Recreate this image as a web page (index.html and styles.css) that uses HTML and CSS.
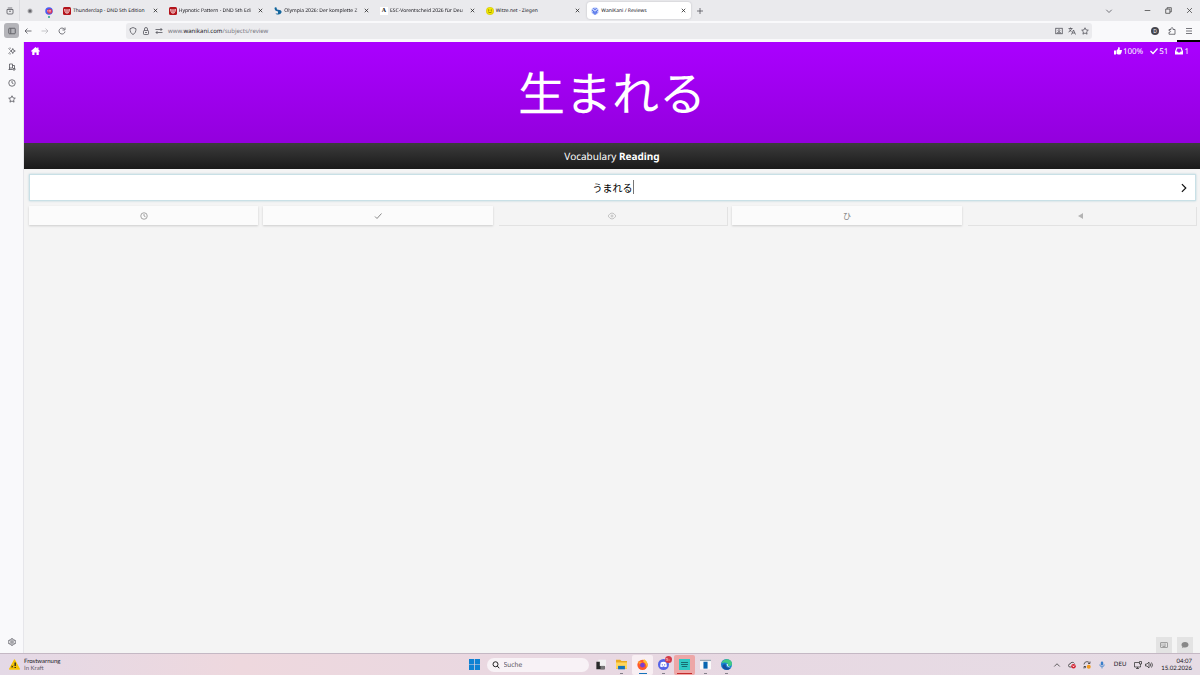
FILE: index.html
```html
<!DOCTYPE html>
<html lang="de">
<head>
<meta charset="utf-8">
<title>WaniKani / Reviews</title>
<link rel="stylesheet" href="styles.css">
</head>
<body>
<svg class="sprite" aria-hidden="true">
    <symbol id="close" viewBox="0 0 10 10"><path d="M1.5 1.5l7 7M8.5 1.5l-7 7"/></symbol>
    <symbol id="star" viewBox="0 0 16 16"><path d="M8 1.5l2 4.3 4.6.6-3.4 3.2.9 4.7L8 12l-4.1 2.3.9-4.7L1.4 6.4 6 5.8z"/></symbol>
    <symbol id="clock" viewBox="0 0 16 16"><circle cx="8" cy="8" r="6.5"/><path d="M8 4v4l3 1.5"/></symbol>
    <symbol id="dnd" viewBox="0 0 16 16"><rect width="16" height="16" rx="3" fill="#b3131b"/><path d="M2 4l4 1 2-1 2 1 4-1-1 5-3 4H6L3 9z" fill="#f6d5d5"/><path d="M5.500 5v5M10.500 5v5M8 4v8" stroke="#b3131b" stroke-width="1.200"/></symbol>
</svg>

<header class="tabbar">
    <button class="view" aria-label="Firefox View"><svg class="ic" viewBox="0 0 16 16"><path d="M3.500 2h9M2 5h12v7a2 2 0 0 1-2 2H4a2 2 0 0 1-2-2zM6 8.500h4"/></svg></button>
    <button class="pin" aria-label="Angeheftet"><svg class="fav" viewBox="0 0 16 16"><circle cx="8" cy="8" r="5" fill="#b0b0b4"/><circle cx="8" cy="8" r="3" fill="#66666c"/></svg></button>
    <button class="pin dot" aria-label="Chat"><svg class="fav" viewBox="0 0 16 16"><circle cx="8" cy="8" r="7.500" fill="#4d5cf0"/><path d="M4 10V6h6v4z" fill="#fff"/><circle cx="9.500" cy="8.500" r="5" fill="#d8365c"/><path d="M7 7h5M7 9.500h5" stroke="#fff" stroke-width="1"/></svg></button>
    <nav class="tabs">
        <div class="tab"><svg class="fav"><use href="#dnd"/></svg><a href="#">Thunderclap - DND 5th Edition</a><button aria-label="Schließen"><svg class="x"><use href="#close"/></svg></button></div>
        <div class="tab"><svg class="fav"><use href="#dnd"/></svg><a class="fade" href="#">Hypnotic Pattern - DND 5th Edi</a><button aria-label="Schließen"><svg class="x"><use href="#close"/></svg></button></div>
        <div class="tab"><svg class="fav" viewBox="0 0 16 16"><path d="M1 2q1-2 4-1l1 4 5 1q5 1 4 5-2 5-8 4-3 0-4-2h5V9Q1 8 1 2z" fill="#14679e"/></svg><a class="fade" href="#">Olympia 2026: Der komplette Z</a><button aria-label="Schließen"><svg class="x"><use href="#close"/></svg></button></div>
        <div class="tab"><span class="fav letter">A</span><a class="fade" href="#">ESC-Vorentscheid 2026 für Deu</a><button aria-label="Schließen"><svg class="x"><use href="#close"/></svg></button></div>
        <div class="tab"><svg class="fav" viewBox="0 0 16 16"><circle cx="8" cy="8" r="7.500" fill="#f4ea00" stroke="#c5b800"/><circle cx="5.500" cy="6" r="1.200" fill="#554c00"/><circle cx="10.500" cy="6" r="1.200" fill="#554c00"/><path d="M4 9.500q4 4 8 0" fill="none" stroke="#554c00"/></svg><a href="#">Witze.net - Ziegen</a><button aria-label="Schließen"><svg class="x"><use href="#close"/></svg></button></div>
        <div class="tab active"><svg class="fav" viewBox="0 0 16 16"><circle cx="8" cy="8" r="7.500" fill="#c6d3fb"/><path d="M5 2l2 3h2l2-3M2 6l3 2-1 4M14 6l-3 2 1 4M6 10h4v4H6z" fill="none" stroke="#4a6ce8" stroke-width="2"/></svg><a href="#">WaniKani / Reviews</a><button aria-label="Schließen"><svg class="x"><use href="#close"/></svg></button></div>
    </nav>
    <button class="new" aria-label="Neuer Tab"><svg class="ic" viewBox="0 0 16 16"><path d="M8 2v12M2 8h12"/></svg></button>
    <div class="window">
        <button aria-label="Alle Tabs"><svg class="ic" viewBox="0 0 16 16"><path d="M2.500 5.500L8 11l5.500-5.500"/></svg></button>
        <button class="min" aria-label="Minimieren"><svg class="wi" viewBox="0 0 10 10"><path d="M1 5h8"/></svg></button>
        <button aria-label="Verkleinern"><svg class="wi" viewBox="0 0 10 10"><path d="M1 3h6v6H1zM3 3V1h6v6H7"/></svg></button>
        <button aria-label="Fenster schließen"><svg class="wi"><use href="#close"/></svg></button>
    </div>
</header>

<div class="toolbar">
    <div class="nav">
        <button class="side-toggle" aria-label="Seitenleiste"><svg class="ic" viewBox="0 0 16 16"><rect x="1.500" y="2.500" width="13" height="11" rx="1.500"/><path d="M5.500 3v10"/></svg></button>
        <button aria-label="Zurück"><svg class="ic" viewBox="0 0 16 16"><path d="M15 8H2M7 3L2 8l5 5"/></svg></button>
        <button aria-label="Vor" disabled><svg class="ic" viewBox="0 0 16 16"><path d="M1 8h13M9 3l5 5-5 5"/></svg></button>
        <button aria-label="Neu laden"><svg class="ic" viewBox="0 0 16 16"><path d="M14 9A6 6 0 1 1 12.500 4M14 1v5H9"/></svg></button>
    </div>
    <div class="urlbar">
        <svg class="ic" viewBox="0 0 16 16"><path d="M8 1l6 2.500c0 6-2 9.500-6 11.500-4-2-6-5.500-6-11.500z"/></svg>
        <svg class="ic" viewBox="0 0 16 16"><rect x="3" y="7" width="10" height="8" rx="1.500"/><path d="M5 7V4a3 3 0 0 1 6 0v3M6 11h4"/></svg>
        <svg class="ic" viewBox="0 0 16 16"><path d="M1 5h13M11 2l3 3-3 3M15 11H2M5 8l-3 3 3 3"/></svg>
        <a class="url" href="#">www.<b>wanikani.com</b>/subjects/review</a>
        <button aria-label="Installieren"><svg class="ic" viewBox="0 0 16 16"><rect x="1.500" y="2.500" width="13" height="11"/><path d="M8 4v5M5.500 7L8 9.500 10.500 7M4 11.500h8"/></svg></button>
        <button aria-label="Übersetzen"><svg class="ic" viewBox="0 0 16 16"><path d="M1 3h8M5 1v2M7.500 3Q6 8 1 10M3 5q2 4 4 4M7 15l4-9 4 9M8.500 12h5"/></svg></button>
        <button aria-label="Lesezeichen"><svg class="ic"><use href="#star"/></svg></button>
    </div>
    <div class="extras">
        <button class="account" aria-label="Konto">D</button>
        <button aria-label="Erweiterungen"><svg class="ic" viewBox="0 0 16 16"><path d="M2 14.500v-4c4 1 4-4 0-3V5h4c-1-5 5-5 4 0h4v9.500z"/></svg></button>
        <button aria-label="Menü"><svg class="ic" viewBox="0 0 16 16"><path d="M2 3h12M2 8h12M2 13h12"/></svg></button>
    </div>
    <span class="strip"></span>
</div>

<div class="main">
    <aside class="sidebar">
        <button aria-label="KI-Chatbot"><svg class="ic" viewBox="0 0 16 16"><path d="M9.500 3l1.500 3.500L14.500 8 11 9.500 9.500 13 8 9.500 4.500 8 8 6.500zM1 3l3 2M1 13l3-2M4 1l1 2M4 15l1-2"/></svg></button>
        <button aria-label="Synchronisierte Tabs"><svg class="ic" viewBox="0 0 16 16"><path d="M3 10V2h6v8zM9 5h4v6M1 13h8M3 10v3M10 11h4v3h-4z"/></svg></button>
        <button aria-label="Chronik"><svg class="ic"><use href="#clock"/></svg></button>
        <button aria-label="Lesezeichen"><svg class="ic"><use href="#star"/></svg></button>
        <button class="settings" aria-label="Einstellungen"><svg class="ic" viewBox="0 0 16 16"><path d="M6.500 1.500h3l.5 2 2 1 2-.5 1 2.500L13.500 8l1.500 1.500-1 2.500-2-.5-2 1-.5 2h-3l-.5-2-2-1-2 .5-1-2.500L2.500 8 1 6.500 2 4l2 .5 2-1z"/><circle cx="8" cy="8" r="2.500"/></svg></button>
    </aside>

    <main class="review">
        <div class="character">
            <div class="topline">
                <a class="home" href="#" aria-label="Startseite"><svg viewBox="0 0 18 16"><path d="M9 0L0 8l1.300 1.500L2.500 8.500V16H7v-5h4v5h4.500V8.500l1.200 1L18 8l-3-2.700V1h-2.500v2z"/></svg></a>
                <div class="stats">
                    <span><svg viewBox="0 0 16 16"><path d="M0 7h4v8H0zM5 7l3-3 1-4c3 0 3 3 2 6h4c2 1 1 2 0 3 1 1 0 2-.5 2.500.5 1-.5 2-1 2-.5 1.500-1 1.500-2 1.500H8l-3-1.500z"/></svg>100%</span>
                    <span><svg viewBox="0 0 16 16"><path d="M1 8l5 5 9-10" fill="none" stroke="#fff" stroke-width="2.500"/></svg>51</span>
                    <span><svg viewBox="0 0 16 16"><path fill-rule="evenodd" d="M3 1h10l3 8v6H0V9zM4.500 3L2.500 9H5l1 2h4l1-2h2.500l-2-6z"/></svg>1</span>
                </div>
            </div>
            <h1 lang="ja">生まれる</h1>
        </div>
        <div class="question">Vocabulary <b>Reading</b></div>
        <form class="answer">
            <input type="text" lang="ja" value="うまれる" aria-label="Reading">
            <span class="caret"></span>
            <button type="button" aria-label="Weiter"><svg viewBox="0 0 10 16"><path d="M1.500 1.500L8 8l-6.500 6.500"/></svg></button>
        </form>
        <div class="actions">
            <button aria-label="Last items"><svg><use href="#clock"/></svg></button>
            <button aria-label="Correct"><svg viewBox="0 0 16 16"><path d="M2 9l4 4 9-10" stroke-width="2"/></svg></button>
            <button aria-label="Item info" disabled><svg viewBox="0 0 16 16"><path d="M0 8q8-12 16 0-8 12-16 0z"/><circle cx="8" cy="8" r="2"/></svg></button>
            <button class="kana" lang="ja" aria-label="Kana">ひ</button>
            <button aria-label="Audio" disabled><svg viewBox="0 0 16 16"><path class="solid" d="M2 8l7-4 3-2v12l-3-2z"/></svg></button>
        </div>
        <div class="tools">
            <button aria-label="Keyboard"><svg viewBox="0 0 16 16"><rect x="1" y="3" width="14" height="10" rx="1"/><path d="M3 6h10M3 8.500h10" stroke-dasharray="1.500 1"/><path d="M5 11h6"/></svg></button>
            <button aria-label="Feedback"><svg viewBox="0 0 16 16"><path class="solid" d="M8 2c4.500 0 7 2.500 7 5.500S12.500 13 8 13q-1.500 0-2.500-.4Q4 14 1.500 14.500 3 13 3 11.500 1 10 1 7.500C1 4.500 3.500 2 8 2z"/></svg></button>
        </div>
    </main>
</div>

<footer class="taskbar">
    <a class="weather" href="#">
        <svg viewBox="0 0 16 16"><path d="M8 1.500L15 14.500H1z" fill="#f5c400" stroke="#f5c400" stroke-width="2" stroke-linejoin="round"/><path d="M9 5v5M9 11.500v1.500" stroke="#222" stroke-width="2"/><path d="M3 10l3 2M6 9.500l-2 3" stroke="#222"/></svg>
        <span>Frostwarnung<small>In Kraft</small></span>
    </a>
    <div class="apps">
        <button aria-label="Start"><svg viewBox="0 0 16 16"><path d="M0 0h7.500v7.500H0zM8.500 0H16v7.500H8.500zM0 8.500h7.500V16H0zM8.500 8.500H16V16H8.500z" fill="#0e82d3"/></svg></button>
        <label class="search"><svg viewBox="0 0 16 16"><circle cx="7" cy="6.500" r="5"/><path d="M10.500 10l4 4.500"/></svg><input type="search" placeholder="Suche" aria-label="Suche"></label>
        <button aria-label="Taskansicht"><svg viewBox="0 0 16 16"><path d="M5 1h11v10H5z" fill="#f2f2f2"/><path d="M2 4h5v6h7v5H2z" fill="#292929"/><path d="M8 10h6v5H8z" fill="#777"/></svg></button>
        <button class="run" aria-label="Explorer"><svg viewBox="0 0 16 16"><path d="M0 1h6l2 2h8v11H0z" fill="#e9a91f"/><path d="M0 5h16v9H0z" fill="#ffd65c"/><path d="M3 10h10v5H3z" fill="#1673ba"/></svg></button>
        <button class="run current" aria-label="Firefox"><svg viewBox="0 0 16 16"><circle cx="8" cy="8.500" r="7.500" fill="#ff5a2c"/><path d="M10 0c5 3 7 9 4 13 0-6-3-8-5-9z" fill="#ffbf2e"/><path d="M1 4c3-1 5 0 6 1l-3 3z" fill="#ff9d2a"/><circle cx="8" cy="9" r="3.500" fill="#7a3fcf"/></svg></button>
        <button class="run" aria-label="Discord"><svg viewBox="0 0 16 16"><circle cx="8" cy="8" r="8" fill="#5463e8"/><path d="M4 5q4-2 8 0l1 6-3 1-1-1H7l-1 1-3-1z" fill="#fff"/><circle cx="6.300" cy="8.500" r="1" fill="#5463e8"/><circle cx="9.700" cy="8.500" r="1" fill="#5463e8"/></svg><i class="badge">9+</i></button>
        <button class="run alert" aria-label="Notizen"><svg viewBox="0 0 16 16"><path d="M0 0h16v16H0z" fill="#2fc9c4"/><path d="M3 5h10M3 8h10M4 11h8" stroke="#176b70" stroke-width="1.500"/></svg></button>
        <button class="run" aria-label="Programm"><svg viewBox="0 0 16 16"><path d="M0 1h16v14H0z" fill="#fafafa"/><path d="M0 1h16v2H0z" fill="#9aa8b5"/><path d="M5 4h6v10H5z" fill="#0866b1"/></svg></button>
        <button class="run" aria-label="Edge"><svg viewBox="0 0 16 16"><circle cx="8" cy="8" r="8" fill="#1681cf"/><path d="M1 6C3-2 16-1 16 7c0 4-5 4-6 2 1-3-4-5-9-3z" fill="#43c985"/><path d="M7 8c-1 4 3 6 7 5-3 4-10 4-12-2 0-3 3-4 5-3z" fill="#174f9f"/><path d="M8 7q3 0 2 3l4 2q-5 1-6-5z" fill="#e9f5f5"/></svg></button>
    </div>
    <div class="tray">
        <div class="icons">
            <svg viewBox="0 0 16 16"><path d="M2.500 11L8 5.500l5.500 5.500"/></svg>
            <svg viewBox="0 0 16 16"><path d="M7 12H4a3 3 0 0 1 0-6 5 5 0 0 1 9-1"/><circle cx="11" cy="10.500" r="4.500" fill="#d3202f" stroke="none"/><path d="M9.500 9l3 3M12.500 9l-3 3" stroke="#fff"/></svg>
            <svg viewBox="0 0 16 16"><path d="M2 7a6 6 0 0 1 11-3M14 1v4h-4M6 14l-4-3v4M2 11h4"/><circle cx="11.500" cy="11.500" r="4" fill="#f29a1f" stroke="none"/></svg>
            <svg viewBox="0 0 16 16"><rect x="5.500" y="1" width="5" height="8" rx="2.500" fill="#3a7fcb" stroke="none"/><path d="M3.500 7a4.500 4.500 0 0 0 9 0M8 12v3" stroke="#3a7fcb"/></svg>
        </div>
        <span>DEU</span>
        <div class="status">
            <svg viewBox="0 0 16 16"><path d="M10 3H1v9h12V9M4 15h6M7 12v3M11 1h4v5h-4zM13 6v3"/></svg>
            <svg viewBox="0 0 16 16"><path d="M1 6h3l4-4v12L4 10H1zM10.500 5q2 3 0 6M13 3q4 5 0 10"/></svg>
        </div>
        <time datetime="2026-02-15T04:07">04:07<br>15.02.2026</time>
    </div>
</footer>
</body>
</html>
```

FILE: styles.css
```css
* {
    box-sizing: border-box;
}
body {
    margin: 0;
    min-height: 100vh;
    display: flex;
    flex-direction: column;
    font-family: "Noto Sans", "Noto Sans CJK JP", sans-serif;
    font-size: 6px;
    text-rendering: geometricPrecision;
    color: #15141a;
    background: #f4f4f4;
}
a {
    color: inherit;
    text-decoration: none;
}
button {
    display: flex;
    align-items: center;
    justify-content: center;
    padding: 0;
    border: 0;
    background: none;
    color: inherit;
    font: inherit;
}
svg {
    display: block;
    flex: none;
}
.sprite {
    display: none;
}
.ic {
    width: 8px;
    height: 8px;
    fill: none;
    stroke: #4b4b53;
    stroke-width: 1.5;
}

/* tab bar */
.tabbar {
    display: flex;
    align-items: center;
    height: 21px;
    background: #eaeaed;
}
.view {
    width: 20px;
    height: 21px;
    border-right: 1px solid #dcdce0;
}
.pin {
    width: 19px;
    height: 20px;
    position: relative;
}
.dot::after {
    content: "";
    position: absolute;
    left: 9px;
    bottom: 3px;
    width: 2px;
    height: 2px;
    border-radius: 1px;
    background: #20a58a;
}
.fav {
    flex: none;
    width: 8px;
    height: 8px;
}
.letter {
    background: #fff;
    font: bold 6px/8px "Liberation Serif", serif;
    text-align: center;
}
.tabs {
    display: flex;
    flex: 0 1 632px;
    gap: 2px;
    min-width: 0;
    margin-left: 1px;
}
.tab {
    display: flex;
    flex: 1;
    align-items: center;
    gap: 2px;
    min-width: 0;
    height: 17px;
    padding: 0 5px 0 4px;
    border-radius: 3px;
}
.tab a {
    flex: 1;
    min-width: 0;
    font-size: 5px;
    white-space: nowrap;
}
.tab .fade {
    overflow: hidden;
    mask-image: linear-gradient(90deg, #000 90%, transparent);
}
.active {
    background: #fff;
    box-shadow: 0 0 2px #b5b5ba;
}
.x {
    width: 5px;
    height: 5px;
    stroke: #222;
    stroke-width: 1.5;
}
.new {
    width: 18px;
}
.window {
    display: flex;
    gap: 14px;
    margin-left: auto;
    padding-right: 7px;
}
.window .min {
    margin-left: 17px;
}
.wi {
    width: 7px;
    height: 7px;
    fill: none;
    stroke: #333;
    stroke-width: 1;
}

/* toolbar */
.toolbar {
    position: relative;
    display: flex;
    align-items: center;
    height: 21px;
    padding-bottom: 2px;
    background: #f9f9fb;
}
.nav {
    display: flex;
    align-items: center;
    gap: 1px;
    width: 126px;
    padding-left: 4px;
}
.nav button {
    width: 16px;
    height: 15px;
}
.nav .side-toggle {
    width: 15px;
    border-radius: 3px;
    background: #b4b4b9;
}
.nav button:disabled {
    opacity: .4;
}
.urlbar {
    display: flex;
    flex: 0 1 966px;
    align-items: center;
    gap: 5px;
    height: 16px;
    padding: 0 3px;
    border-radius: 3px;
    background: #ebebee;
}
.url {
    flex: 1;
    color: #77777f;
}
.url b {
    font-weight: normal;
    color: #15141a;
}
.extras {
    display: flex;
    gap: 9px;
    margin-left: auto;
    padding-right: 7px;
}
.account {
    width: 8px;
    height: 8px;
    border-radius: 50%;
    background: #45454d;
    color: #fff;
    font-size: 5px;
}
.strip {
    position: absolute;
    right: 0;
    bottom: 0;
    width: 23px;
    height: 2px;
    background: #000;
}

.main {
    display: flex;
    flex: 1;
}
.sidebar {
    display: flex;
    flex-direction: column;
    align-items: center;
    gap: 8px;
    width: 24px;
    padding: 5px 0 7px;
    border-right: 1px solid #e6e6ea;
    background: #f9f9fb;
}
.settings {
    margin-top: auto;
}

/* review page */
.review {
    display: flex;
    flex: 1;
    flex-direction: column;
}
.character {
    height: 101px;
    background: linear-gradient(#a0f, #9300dd);
    color: #fff;
}
.topline {
    display: flex;
    align-items: center;
    justify-content: space-between;
    height: 18px;
    padding: 0 11px 0 7px;
}
.topline svg {
    width: 8px;
    height: 8px;
    fill: #fff;
}
.home svg {
    width: 9px;
}
.stats {
    display: flex;
    gap: 7px;
    font-size: 8px;
}
.stats span {
    display: flex;
    align-items: center;
    gap: 1px;
}
h1 {
    margin: 0;
    font: 400 47px/62px "Noto Sans CJK JP", sans-serif;
    text-align: center;
}
.question {
    background: linear-gradient(#3c3c3c, #1a1a1a);
    color: #fff;
    font-size: 10px;
    line-height: 26px;
    text-align: center;
}
.answer {
    position: relative;
    display: flex;
    margin: 5px 4px 0 5px;
    padding-left: 23px;
    border: 1px solid #c9e0e6;
    background: #fff;
    box-shadow: 0 0 2px #b9d2da;
}
.answer input {
    flex: 1;
    min-width: 0;
    height: 25px;
    padding: 0;
    border: 0;
    outline: 0;
    background: none;
    font: 10px "Noto Sans CJK JP", sans-serif;
    text-align: center;
}
.answer button {
    width: 23px;
}
.answer svg {
    width: 6px;
    height: 10px;
    fill: none;
    stroke: #111;
    stroke-width: 2;
}
.caret {
    position: absolute;
    top: 5px;
    left: calc(50% + 20px);
    width: 1px;
    height: 14px;
    background: #777;
}
.actions {
    display: grid;
    grid-template-columns: repeat(5, 1fr);
    gap: 5px;
    margin: 5px 4px 0 5px;
}
.actions button {
    height: 19px;
    background: #fbfbfb;
    box-shadow: 0 1px 2px #ccc;
    color: #888;
}
.actions button:disabled {
    background: #f4f4f4;
    box-shadow: 1px 1px 0 #e2e2e2;
}
.actions button:disabled svg {
    opacity: .6;
}
.actions .kana {
    font: 8px "Noto Sans CJK JP", sans-serif;
}
.actions svg,
.tools svg {
    width: 8px;
    height: 8px;
    fill: none;
    stroke: #888;
    stroke-width: 1.5;
}
.review .solid {
    fill: #888;
    stroke: none;
}
.tools {
    display: flex;
    justify-content: flex-end;
    gap: 5px;
    margin-top: auto;
    padding-right: 7px;
}
.tools button {
    width: 16px;
    height: 16px;
    background: #e3e3e3;
}

/* taskbar */
.taskbar {
    display: grid;
    grid-template-columns: 1fr auto 1fr;
    align-items: center;
    height: 22px;
    border-top: 1px solid #c4b8c4;
    background: linear-gradient(90deg, #e4d9e6, #eed8de 20%, #e8d8e2 50%, #e6dce5);
    font-family: Lato, "Noto Sans", sans-serif;
}
.weather {
    display: flex;
    align-items: center;
    gap: 4px;
    padding-left: 9px;
    line-height: 7px;
}
.weather svg {
    width: 11px;
    height: 11px;
}
.weather small {
    display: block;
    font-size: 6px;
    color: #66606a;
}
.apps {
    display: flex;
    align-items: center;
}
.apps button {
    position: relative;
    width: 21px;
    height: 20px;
}
.apps svg {
    width: 11px;
    height: 11px;
}
.apps .search {
    display: flex;
    align-items: center;
    gap: 4px;
    width: 102px;
    height: 14px;
    padding: 0 5px;
    border-radius: 7px;
    margin: 0 1px 0 2px;
    background: #f8f2f6;
}
.apps .search svg {
    width: 8px;
    height: 8px;
    fill: none;
    stroke: #222;
    stroke-width: 2;
}
.search input {
    flex: 1;
    min-width: 0;
    padding: 0;
    border: 0;
    background: none;
    font: inherit;
    font-size: 7px;
    text-rendering: inherit;
}
.search input::placeholder {
    color: #66606a;
}
.run::after {
    content: "";
    position: absolute;
    bottom: 1px;
    left: 9px;
    width: 3px;
    height: 1px;
    background: #85808a;
}
.apps .current {
    border-radius: 2px;
    background: #f8eff3;
}
.apps .current::after {
    left: 7px;
    width: 8px;
    background: #1673ba;
}
.apps .alert {
    border-radius: 2px;
    background: #eda7a7;
}
.apps .alert::after {
    left: 3px;
    width: 15px;
    background: #c42b2b;
}
.badge {
    position: absolute;
    top: 1px;
    right: 2px;
    width: 7px;
    height: 7px;
    border-radius: 50%;
    background: #d33a48;
    color: #fff;
    font: 4px/7px "Open Sans", sans-serif;
}
.tray {
    display: flex;
    align-items: center;
    justify-content: flex-end;
    gap: 8px;
    padding-right: 8px;
}
.icons {
    display: flex;
    gap: 7px;
}
.tray svg {
    width: 8px;
    height: 8px;
    fill: none;
    stroke: #333;
    stroke-width: 1.5;
}
.status {
    display: flex;
    gap: 3px;
}
time {
    line-height: 7px;
    text-align: right;
}
```
